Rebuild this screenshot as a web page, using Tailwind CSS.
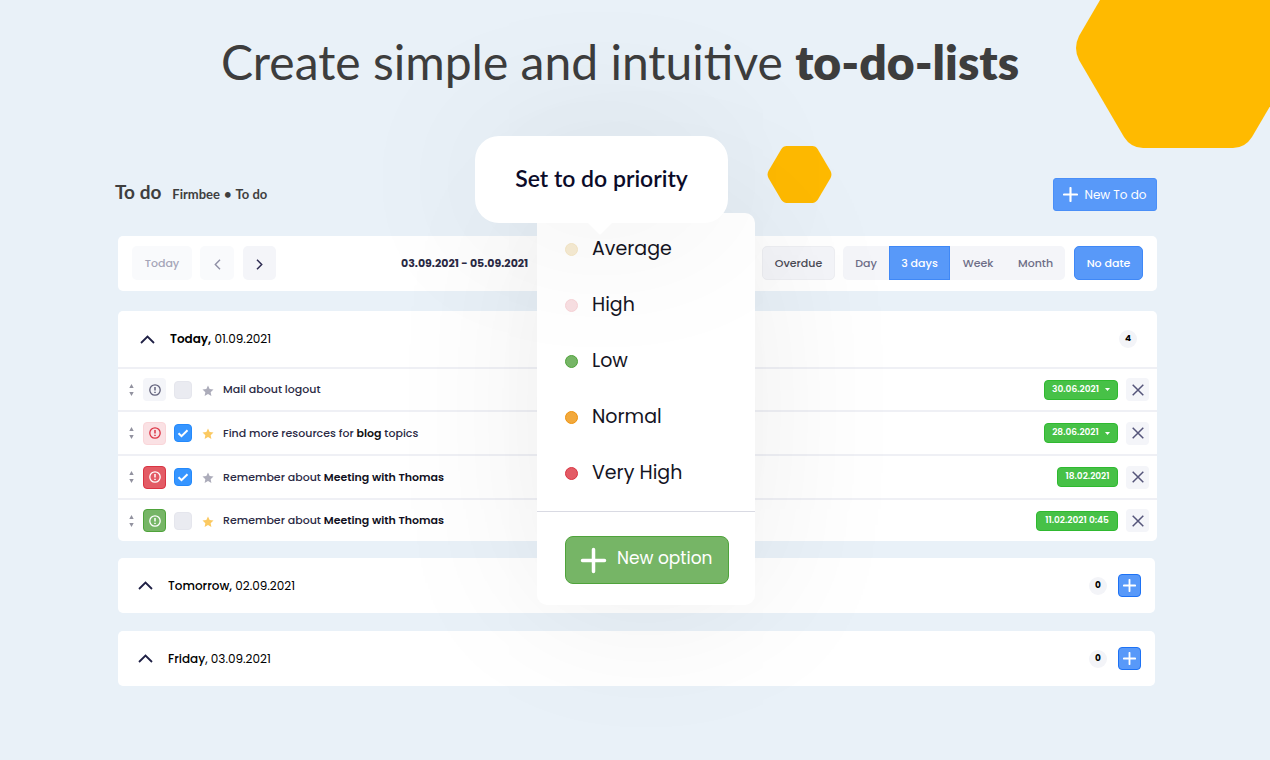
<!DOCTYPE html>
<html lang="en">
<head>
<meta charset="utf-8">
<meta name="viewport" content="width=device-width, initial-scale=1">
<title>To do</title>
<script src="https://cdn.jsdelivr.net/npm/@tailwindcss/browser@4"></script>
</head>
<body class="relative min-h-screen overflow-x-hidden bg-[#e9f1f8] font-[Poppins,Inter,sans-serif] text-[11px] text-[#2b2a45]">

<svg class="hidden">
  <symbol id="hex" viewBox="0 0 228 200"><path fill="#ffba00" d="M5 88 50 11Q57 0 69 0H159Q171 0 178 11L223 88Q229 100 223 112L178 189Q171 200 159 200H69Q57 200 50 189L5 112Q-1 100 5 88Z"/></symbol>
  <symbol id="alert" viewBox="0 0 12 12"><circle cx="6" cy="6" r="5.200" fill="none" stroke="currentColor" stroke-width="1.300"/><path d="M6 3v3.600M6 7.800v1.300" stroke="currentColor" stroke-width="1.500"/></symbol>
  <symbol id="star" viewBox="0 0 24 24"><path fill="currentColor" d="m12 1 3.300 7.200 7.700.9-5.700 5.300 1.500 7.600L12 18.200 5.200 22l1.500-7.600L1 9.100l7.700-.9z"/></symbol>
  <symbol id="check" viewBox="0 0 12 12"><path d="m1.500 6.200 3 3 6-6" fill="none" stroke="#fff" stroke-width="2"/></symbol>
  <symbol id="cross" viewBox="0 0 12 12"><path d="m.7.7 10.600 10.600M11.300.7.7 11.300" stroke="#55557a" stroke-width="1.500"/></symbol>
  <symbol id="sort" viewBox="0 0 5 12"><path d="M2.500 0 4.700 4H.3zM2.500 12 .3 8h4.400z" fill="#92929f"/></symbol>
  <symbol id="up" viewBox="0 0 15 9"><path d="m1 8 6.500-6.500L14 8" fill="none" stroke="#1f2045" stroke-width="1.800"/></symbol>
  <symbol id="plus" viewBox="0 0 12 12"><path d="M6 .8v10.400M.8 6h10.400" stroke="#fff" stroke-width="1.700" stroke-linecap="round"/></symbol>
</svg>

<svg class="absolute -top-[52px] -right-[32px] h-[200px] w-[228px]"><use href="#hex"/></svg>
<svg class="absolute top-[146px] left-[calc(50%+132px)] h-[57px] w-[65px]"><use href="#hex"/></svg>

<main class="pr-[113px] pl-[115px]">
  <h1 class="pt-8 pr-8 text-center font-[Lato,sans-serif] text-[48px] leading-[60px] text-[#3d3d3d]">Create simple and intuitive <b class="font-extrabold">to-do-lists</b></h1>

  <header class="mt-[86px] flex h-[33px] items-center font-[Lato,sans-serif] font-bold text-[#3f3f3f]">
    <h2 class="pb-1 text-[19px]">To do</h2>
    <nav class="ml-[11px] flex gap-1 text-[13px]"><a href="#">Firmbee</a><span>•</span><a href="#">To do</a></nav>
    <button class="ml-auto flex h-[33px] w-[104px] items-center justify-center gap-[6px] rounded-[3px] border border-[#4a8ff8] bg-[#5899f9] font-[Poppins,Inter,sans-serif] text-[12px] font-normal text-white"><svg class="size-[15px]"><use href="#plus"/></svg>New To do</button>
  </header>

  <section class="mt-[25px] ml-[3px] flex h-[55px] items-center rounded-[5px] bg-white px-[14px] pb-px text-[11px] font-medium">
    <button class="h-[34px] w-[60px] rounded-[5px] bg-[#f9fafc] text-[#a5a5b8]">Today</button>
    <button aria-label="Previous" class="ml-2 grid size-[34px] place-items-center rounded-[5px] bg-[#f9fafc]"><svg class="mt-[2px] h-[11px] w-[7px]" viewBox="0 0 7 11"><path d="M6 .8 1.300 5.500 6 10.200" fill="none" stroke="#8f8fa5" stroke-width="1.400"/></svg></button>
    <button aria-label="Next" class="ml-[9px] grid h-[34px] w-[33px] place-items-center rounded-[5px] bg-[#f4f5f9]"><svg class="mt-[2px] h-[11px] w-[7px]" viewBox="0 0 7 11"><path d="m1 .8 4.700 4.700L1 10.200" fill="none" stroke="#2e2c52" stroke-width="1.500"/></svg></button>
    <time class="ml-[125px] font-bold">03.09.2021 - 05.09.2021</time>
    <button class="ml-auto h-[34px] w-[73px] rounded-[5px] border border-[#eeeff3] bg-[#f4f5f9] text-[#4b4b55]">Overdue</button>
    <div class="ml-2 flex h-[34px] overflow-hidden rounded-[5px] bg-[#f4f5f9] text-[#6d6d87]">
      <button class="w-[46px]">Day</button><button class="w-[61px] border border-[#3f88f7] bg-[#5899f9] text-white">3 days</button><button class="w-[56px]">Week</button><button class="w-[59px]">Month</button>
    </div>
    <button class="ml-[9px] h-[34px] w-[69px] rounded-[5px] border border-[#3f88f7] bg-[#5899f9] text-white">No date</button>
  </section>

  <section class="mt-5 ml-[3px] rounded-[5px] bg-white">
    <div class="flex h-[56px] items-center pr-5 pl-[22px]">
      <button aria-label="Collapse today" class="h-[9px] w-[15px]"><svg class="h-[9px] w-[15px]"><use href="#up"/></svg></button>
      <h3 class="ml-[15px] text-[12px] text-black"><b class="font-semibold">Today,</b> 01.09.2021</h3>
      <span class="ml-auto grid size-[18px] place-items-center rounded-full bg-[#f3f4f8] text-[9px] font-bold text-black">4</span>
    </div>
    <ul class="font-medium">
      <li class="flex h-[43px] items-center border-t-2 border-[#eff0f5] pr-2 pl-[11px]">
        <svg class="h-3 w-[5px]"><use href="#sort"/></svg>
        <button aria-label="Priority" class="ml-[9px] grid size-[23px] place-items-center rounded-[4px] bg-[#f4f5f9] text-[#62627c]"><svg class="size-3"><use href="#alert"/></svg></button>
        <input id="t1" type="checkbox" class="ml-2 size-[18px] appearance-none rounded-[4px] border border-[#e5e6ed] bg-[#eaebf1]">
        <svg class="mt-[2px] ml-[10px] size-3 text-[#acacba]"><use href="#star"/></svg>
        <label for="t1" class="ml-[9px]">Mail about logout</label>
        <button class="ml-auto flex h-5 w-[74px] items-center justify-center gap-[6px] rounded-[4px] border border-[#2fb930] bg-[#47c147] text-[9px] font-semibold text-white">30.06.2021<svg class="h-[3px] w-[5px]" viewBox="0 0 5 3"><path fill="#fff" d="M0 0h5L2.500 3z"/></svg></button>
        <button aria-label="Remove" class="ml-2 grid size-[23px] place-items-center rounded-[4px] bg-[#f4f5f9]"><svg class="size-3"><use href="#cross"/></svg></button>
      </li>
      <li class="flex h-[44px] items-center border-t-2 border-[#eff0f5] pr-2 pl-[11px]">
        <svg class="h-3 w-[5px]"><use href="#sort"/></svg>
        <button aria-label="Priority" class="ml-[9px] grid size-[23px] place-items-center rounded-[4px] border border-[#fad6d9] bg-[#fae1e4] text-[#dc3545]"><svg class="size-3"><use href="#alert"/></svg></button>
        <span class="relative ml-2 size-[18px]"><input id="t2" type="checkbox" checked class="block size-[18px] appearance-none rounded-[4px] border border-[#2489fb] bg-[#3695ff]"><svg class="pointer-events-none absolute inset-[3px] size-3"><use href="#check"/></svg></span>
        <svg class="mt-[2px] ml-[10px] size-3 text-[#fbc961]"><use href="#star"/></svg>
        <label for="t2" class="ml-[9px]">Find more resources for <b class="font-semibold text-[#111]">blog</b> topics</label>
        <button class="ml-auto flex h-5 w-[74px] items-center justify-center gap-[6px] rounded-[4px] border border-[#2fb930] bg-[#47c147] text-[9px] font-semibold text-white">28.06.2021<svg class="h-[3px] w-[5px]" viewBox="0 0 5 3"><path fill="#fff" d="M0 0h5L2.500 3z"/></svg></button>
        <button aria-label="Remove" class="ml-2 grid size-[23px] place-items-center rounded-[4px] bg-[#f4f5f9]"><svg class="size-3"><use href="#cross"/></svg></button>
      </li>
      <li class="flex h-[44px] items-center border-t-2 border-[#eff0f5] pr-2 pl-[11px]">
        <svg class="h-3 w-[5px]"><use href="#sort"/></svg>
        <button aria-label="Priority" class="ml-[9px] grid size-[23px] place-items-center rounded-[4px] border border-[#d93442] bg-[#e35b65] text-white"><svg class="size-3"><use href="#alert"/></svg></button>
        <span class="relative ml-2 size-[18px]"><input id="t3" type="checkbox" checked class="block size-[18px] appearance-none rounded-[4px] border border-[#2489fb] bg-[#3695ff]"><svg class="pointer-events-none absolute inset-[3px] size-3"><use href="#check"/></svg></span>
        <svg class="mt-[2px] ml-[10px] size-3 text-[#acacba]"><use href="#star"/></svg>
        <label for="t3" class="ml-[9px]">Remember about <b class="font-semibold text-[#111122]">Meeting with Thomas</b></label>
        <button class="ml-auto h-5 w-[61px] rounded-[4px] border border-[#2fb930] bg-[#47c147] text-[9px] font-semibold text-white">18.02.2021</button>
        <button aria-label="Remove" class="ml-2 grid size-[23px] place-items-center rounded-[4px] bg-[#f4f5f9]"><svg class="size-3"><use href="#cross"/></svg></button>
      </li>
      <li class="flex h-[43px] items-center border-t-2 border-[#eff0f5] pr-2 pl-[11px]">
        <svg class="h-3 w-[5px]"><use href="#sort"/></svg>
        <button aria-label="Priority" class="ml-[9px] grid size-[23px] place-items-center rounded-[4px] border border-[#4fa33b] bg-[#76b566] text-white"><svg class="size-3"><use href="#alert"/></svg></button>
        <input id="t4" type="checkbox" class="ml-2 size-[18px] appearance-none rounded-[4px] border border-[#e5e6ed] bg-[#eaebf1]">
        <svg class="mt-[2px] ml-[10px] size-3 text-[#fbc961]"><use href="#star"/></svg>
        <label for="t4" class="ml-[9px]">Remember about <b class="font-semibold text-[#111122]">Meeting with Thomas</b></label>
        <button class="ml-auto h-5 w-[82px] rounded-[4px] border border-[#2fb930] bg-[#47c147] text-[9px] font-semibold text-white">11.02.2021 0:45</button>
        <button aria-label="Remove" class="ml-2 grid size-[23px] place-items-center rounded-[4px] bg-[#f4f5f9]"><svg class="size-3"><use href="#cross"/></svg></button>
      </li>
    </ul>
  </section>

  <section class="mt-[17px] mr-[2px] ml-[3px] flex h-[55px] items-center rounded-[5px] bg-white pr-[14px] pl-5">
    <button aria-label="Collapse tomorrow" class="h-[9px] w-[15px]"><svg class="h-[9px] w-[15px]"><use href="#up"/></svg></button>
    <h3 class="ml-[15px] text-[12px] text-black"><b class="font-medium">Tomorrow,</b> 02.09.2021</h3>
    <span class="ml-auto grid size-[18px] place-items-center rounded-full bg-[#f3f4f8] text-[9px] font-bold text-black">0</span>
    <button aria-label="Add to tomorrow" class="ml-[11px] grid size-[23px] place-items-center rounded-[4px] border border-[#1d72f5] bg-[#5899f9]"><svg class="size-[13px]"><use href="#plus"/></svg></button>
  </section>

  <section class="mt-[18px] mr-[2px] ml-[3px] flex h-[55px] items-center rounded-[5px] bg-white pr-[14px] pl-5">
    <button aria-label="Collapse Friday" class="h-[9px] w-[15px]"><svg class="h-[9px] w-[15px]"><use href="#up"/></svg></button>
    <h3 class="ml-[15px] text-[12px] text-black"><b class="font-medium">Friday</b>, 03.09.2021</h3>
    <span class="ml-auto grid size-[18px] place-items-center rounded-full bg-[#f3f4f8] text-[9px] font-bold text-black">0</span>
    <button aria-label="Add to Friday" class="ml-[11px] grid size-[23px] place-items-center rounded-[4px] border border-[#1d72f5] bg-[#5899f9]"><svg class="size-[13px]"><use href="#plus"/></svg></button>
  </section>
</main>

<div class="absolute top-[213px] left-[calc(50%-98px)] w-[218px] rounded-[10px] bg-white pt-2 pb-[21px] text-[19px] text-[#15151f] shadow-[0_0_160px_rgba(0,0,0,0.08)]">
  <ul class="pl-7">
    <li class="flex h-14 items-center gap-[14px]"><i class="size-[13px] rounded-full border border-[#f5e7c6] bg-[#f7ecd4]"></i>Average</li>
    <li class="flex h-14 items-center gap-[14px]"><i class="size-[13px] rounded-full border border-[#f7d3d7] bg-[#f8dfe2]"></i>High</li>
    <li class="flex h-14 items-center gap-[14px]"><i class="size-[13px] rounded-full border border-[#4fa33b] bg-[#76b566]"></i>Low</li>
    <li class="flex h-14 items-center gap-[14px]"><i class="size-[13px] rounded-full border border-[#ee930f] bg-[#f2a93c]"></i>Normal</li>
    <li class="flex h-14 items-center gap-[14px]"><i class="size-[13px] rounded-full border border-[#d93442] bg-[#e35b65]"></i>Very High</li>
  </ul>
  <div class="mt-[10px] border-t border-[#d9dae3] px-[28px] pt-6">
    <button class="flex h-12 w-[164px] items-center gap-[10px] rounded-[8px] border border-[#4fa33b] bg-[#76b566] pl-[14px] text-[17px] text-white"><svg class="size-[27px]" viewBox="0 0 27 27"><path d="M13.500 2.500v22M2.500 13.500h22" stroke="#fff" stroke-width="3.500" stroke-linecap="round"/></svg><span class="pb-[2px]">New option</span></button>
  </div>
</div>
<div class="absolute top-[136px] left-[calc(50%-160px)] grid h-[87px] w-[253px] place-items-center rounded-[24px] bg-white pb-[2px] font-[Lato,sans-serif] text-[23px] font-semibold text-[#0b0b29] shadow-[0_0_160px_rgba(0,0,0,0.08)]">Set to do priority
  <svg class="absolute top-[86px] left-[112px] h-[13px] w-[26px]" viewBox="0 0 26 13"><path fill="#fff" d="M0 0h26L14 12q-1 1-2 0z"/></svg>
</div>
</body>
</html>
